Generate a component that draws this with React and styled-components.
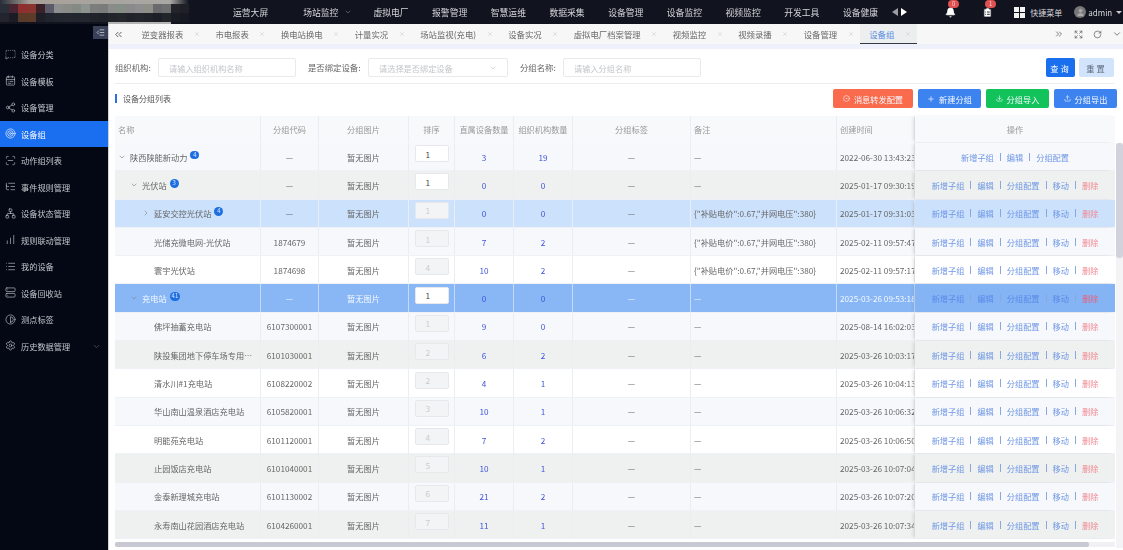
import styled, { createGlobalStyle } from 'styled-components'
import {
	Bell, CalendarRange, ChevronDown, ChevronRight, ChevronsLeft, ChevronsRight, CircleDot, ClipboardList,
	Contrast, Download, Expand, IndentDecrease, ListTree, List, MessageSquareDashed, Network, Plus, RotateCw,
	ScanLine, Server, Settings, Share2, Target, Upload, User, X, ChartNoAxesColumnIncreasing
} from 'lucide-react'

const NAV = ['运营大屏', '场站监控', '虚拟电厂', '报警管理', '智慧运维', '数据采集', '设备管理', '设备监控', '视频监控', '开发工具', '设备健康']
const TABS = ['逆变器报表', '市电报表', '换电站换电', '计量实况', '场站监视(充电)', '设备实况', '虚拟电厂档案管理', '视频监控', '视频录播', '设备管理', '设备组']
const MENU = [
	['设备分类', MessageSquareDashed], ['设备模板', CalendarRange], ['设备管理', Share2], ['设备组', Target],
	['动作组列表', ScanLine], ['事件规则管理', ListTree], ['设备状态管理', Network], ['规则联动管理', ChartNoAxesColumnIncreasing],
	['我的设备', List], ['设备回收站', Server], ['测点标签', Contrast], ['历史数据管理', Settings]
]
const REMARK = '{"补贴电价":0.67,"并网电压":380}'
const ROWS = [
	{ name: '陕西陕能新动力', level: 0, caret: 'down', badge: 4, sort: 1, on: true, direct: 3, org: 19, date: '2022-06-30 13:43:23', tone: 'light', short: true },
	{ name: '光伏站', level: 1, caret: 'down', badge: 3, sort: 1, on: true, direct: 0, org: 0, date: '2025-01-17 09:30:19', tone: 'grey' },
	{ name: '延安交控光伏站', level: 2, caret: 'right', badge: 4, sort: 1, direct: 0, org: 0, remark: REMARK, date: '2025-01-17 09:31:03', tone: 'picked' },
	{ name: '光储充微电网-光伏站', level: 2, code: '1874679', sort: 1, direct: 7, org: 2, remark: REMARK, date: '2025-02-11 09:57:47', tone: 'light' },
	{ name: '寰宇光伏站', level: 2, code: '1874698', sort: 4, direct: 10, org: 2, remark: REMARK, date: '2025-02-11 09:57:17', tone: 'white' },
	{ name: '充电站', level: 1, caret: 'down', badge: 41, sort: 1, on: true, direct: 0, org: 0, date: '2025-03-26 09:53:18', tone: 'strong' },
	{ name: '佛坪抽蓄充电站', level: 2, code: '6107300001', sort: 1, direct: 9, org: 0, date: '2025-08-14 16:02:03', tone: 'light' },
	{ name: '陕投集团地下停车场专用…', level: 2, code: '6101030001', sort: 2, direct: 6, org: 2, date: '2025-03-26 10:03:17', tone: 'grey' },
	{ name: '清水川#1充电站', level: 2, code: '6108220002', sort: 2, direct: 4, org: 1, date: '2025-03-26 10:04:13', tone: 'white' },
	{ name: '华山南山温泉酒店充电站', level: 2, code: '6105820001', sort: 3, direct: 10, org: 1, date: '2025-03-26 10:06:32', tone: 'light' },
	{ name: '明能苑充电站', level: 2, code: '6101120001', sort: 4, direct: 7, org: 2, date: '2025-03-26 10:06:50', tone: 'white' },
	{ name: '止园饭店充电站', level: 2, code: '6101040001', sort: 5, direct: 10, org: 1, date: '2025-03-26 10:07:04', tone: 'grey' },
	{ name: '金泰新理城充电站', level: 2, code: '6101130002', sort: 6, direct: 21, org: 2, date: '2025-03-26 10:07:20', tone: 'light' },
	{ name: '永寿南山花园酒店充电站', level: 2, code: '6104260001', sort: 7, direct: 11, org: 1, date: '2025-03-26 10:07:34', tone: 'grey' }
]
const TONES = { light: '#f6f8fb', white: '#ffffff', grey: '#eef1ef', picked: '#cce1fc', strong: '#89b7f5' }
const MOSAIC_TOP = ['#2a2e38', '#4a2430', '#8e3030', '#8a3430', '#3a2028', '#5a5a68', '#8e8e8e', '#8a8c88', '#868a84', '#8e9490', '#7c7e7e', '#7a7c7c', '#8a8c8a', '#868e88', '#8a8a8c', '#8e8e90', '#8e9088', '#6a6a6e', '#6e7070', '#22242a', '#1e2028']
const MOSAIC_BOTTOM = ['#22252e', '#1c1c28', '#5a3a28', '#5c3c28', '#1e1e28', '#20242c', '#22262e', '#24282e', '#22262e', '#24282e', '#20242a', '#1e2228', '#22262a', '#24282c', '#20242a', '#22262c', '#20242a', '#1c2026', '#22262a', '#1a1c24', '#161822']

const GlobalStyle = createGlobalStyle`
	html, body {
		margin: 0;
		height: 100%;
		overflow: hidden;
		background: #fff;
	}
	* {
		box-sizing: border-box;
	}
`

const Root = styled.div`
	width: 1123px;
	height: 550px;
	display: flex;
	flex-direction: column;
	overflow: hidden;
	font-family: "Noto Sans CJK SC", "Noto Sans", sans-serif;
	font-size: 8.2px;
	color: #666;
	filter: blur(0.45px);
`

const TopBar = styled.header`
	height: 24px;
	flex: none;
	display: flex;
	align-items: center;
	background: #11131e;
	color: #d4d6da;
	font-size: 8.8px;
`

const Logo = styled.div`
	width: 195px;
	height: 24px;
	flex: none;
	display: grid;
	grid-template-columns: repeat(21, 9px);
	grid-template-rows: 4px 9px 9px 2px;
	background: #11131e;
`

const LogoCell = styled.span`
	background: ${props => props.$color};
`

const LogoBand = styled.span`
	grid-column: 1 / -1;
	background: linear-gradient(90deg, #2a2e38 0, #a8a098 30px, #a8a8a4 170px, #a8a8a4 90%, #11131e 100%);
`

const LogoEdge = styled.span`
	grid-row: 4;
	grid-column: 13 / 20;
	background: #b4b4b4;
`

const NavList = styled.nav`
	display: flex;
	align-items: center;
	gap: 23.3px;
	margin-left: 38px;
`

const NavItem = styled.span`
	display: flex;
	align-items: center;
	width: ${props => props.$wide ? 46.9 : 35.4}px;
	white-space: nowrap;
	position: relative;
`

const NavCaret = styled(ChevronDown)`
	position: absolute;
	left: 41px;
	top: 2px;
	color: #777;
`

const NavArrows = styled.div`
	display: flex;
	gap: 3px;
	margin-left: 14px;
`

const Triangle = styled.span`
	width: 0;
	height: 0;
	border-top: 4.5px solid transparent;
	border-bottom: 4.5px solid transparent;
	${props => props.$left ? 'border-right: 6px solid #9b9da3;' : 'border-left: 6px solid #fff;'}
`

const TopTools = styled.div`
	display: flex;
	align-items: center;
	margin-left: 38px;
	font-size: 8px;
`

const AlertIcon = styled.span`
	position: relative;
	display: flex;
	width: 12px;
	margin-right: ${props => props.$gap}px;
	color: #fff;
`

const AlertCount = styled.b`
	position: absolute;
	left: 3px;
	top: -7px;
	width: 11px;
	height: 8px;
	border-radius: 4px;
	background: #e05050;
	color: #f7d0d0;
	font-size: 6px;
	font-weight: 400;
	line-height: 8px;
	text-align: center;
`

const QuickGrid = styled.span`
	width: 11px;
	height: 11px;
	display: grid;
	grid-template-columns: 1fr 1fr;
	gap: 1px;
	margin-right: 5px;
`

const QuickCell = styled.i`
	background: #f2f2f2;
`

const Avatar = styled.span`
	width: 12px;
	height: 12px;
	border-radius: 50%;
	background: #777;
	color: #aaa;
	display: flex;
	align-items: center;
	justify-content: center;
	margin: 0 2px 0 12px;
`

const UserCaret = styled.span`
	width: 0;
	height: 0;
	margin-left: 4px;
	border-left: 3px solid transparent;
	border-right: 3px solid transparent;
	border-top: 3px solid #ccc;
`

const Body = styled.div`
	flex: 1;
	min-height: 0;
	display: flex;
`

const Sidebar = styled.aside`
	width: 109px;
	flex: none;
	background: #030814;
	border-right: 1px solid #d0d2d6;
	color: #c2c6cc;
`

const ToggleRow = styled.div`
	height: 17px;
	display: flex;
	justify-content: flex-end;
	padding-top: 2px;
`

const Toggle = styled.button`
	width: 15px;
	height: 13px;
	padding: 0;
	border: 0;
	background: #3a4058;
	color: #d6d8e0;
	display: flex;
	align-items: center;
	justify-content: center;
`

const MenuItem = styled.div`
	height: 26.5px;
	display: flex;
	align-items: center;
	gap: 5px;
	padding-left: 5px;
	position: relative;
	${props => props.$active && 'background: #1a6ff0; color: #fff;'}
`

const MenuCaret = styled(ChevronDown)`
	position: absolute;
	left: 92px;
	top: 9px;
	color: #555a66;
`

const Main = styled.main`
	flex: 1;
	min-width: 0;
	display: flex;
	flex-direction: column;
	background: #fff;
`

const TabBar = styled.div`
	height: 20px;
	flex: none;
	display: flex;
	align-items: center;
	background: #f7f7f7;
	color: #6a6a6a;
	font-size: 8.4px;
`

const TabBack = styled.span`
	width: 23px;
	flex: none;
	display: flex;
	padding-left: 4px;
	color: #555;
`

const Tab = styled.div`
	height: 20px;
	display: flex;
	align-items: center;
	gap: 10.5px;
	padding: 0 6px 0 9.5px;
	white-space: nowrap;
	${props => props.$active && `
		background: #eceef0;
		color: #5b8fe0;
		border-bottom: 1.5px solid #333a44;
	`}
`

const TabClose = styled(X)`
	color: #c8c8c8;
	flex: none;
`

const TabTools = styled.div`
	margin-left: auto;
	display: flex;
	align-items: center;
	gap: 10px;
	padding-right: 1px;
	color: #666;
`

const Strip = styled.div`
	height: 5px;
	flex: none;
	background: #eef0fb;
`

const Content = styled.div`
	flex: 1;
	min-height: 0;
	padding: 9px 0 0 6px;
	position: relative;
	overflow: hidden;
`

const FilterBar = styled.form`
	width: 999px;
	height: 26px;
	display: flex;
	align-items: flex-start;
	border-bottom: 1px solid #eceef2;
	margin: 0;
`

const FilterLabel = styled.label`
	width: ${props => props.$width}px;
	flex: none;
	height: 19px;
	line-height: 19px;
	margin-left: ${props => props.$left || 0}px;
	margin-right: 7px;
	color: #666;
	font-size: 8.4px;
	white-space: nowrap;
`

const FilterInput = styled.div`
	width: ${props => props.$width}px;
	flex: none;
	height: 19px;
	padding: 0 10px;
	border: 1px solid #e8eaee;
	border-radius: 2px;
	color: #c4c6ca;
	display: flex;
	align-items: center;
	justify-content: space-between;
`

const FilterActions = styled.div`
	margin-left: auto;
	display: flex;
	gap: 4px;
`

const QueryButton = styled.button`
	width: ${props => props.$primary ? 29 : 35}px;
	height: 19px;
	padding: 0;
	border: 0;
	border-radius: 2px;
	font: inherit;
	letter-spacing: 2px;
	background: ${props => props.$primary ? '#1a6fee' : '#d2e4fb'};
	color: ${props => props.$primary ? '#fff' : '#5a6a80'};
`

const TitleRow = styled.div`
	height: 19px;
	width: 1002px;
	margin: 5px 0 8px;
	display: flex;
	align-items: center;
	justify-content: space-between;
`

const Title = styled.h2`
	margin: 0;
	padding-left: 6px;
	border-left: 2px solid #2a6fe8;
	font-size: 8px;
	font-weight: 400;
	line-height: 9px;
	color: #555;
`

const ActionGroup = styled.div`
	display: flex;
	gap: 5px;
`

const ActionButton = styled.button`
	width: ${props => props.$width}px;
	height: 19px;
	padding: 0;
	border: 0;
	border-radius: 2px;
	display: flex;
	align-items: center;
	justify-content: center;
	gap: 4px;
	font: inherit;
	color: #f4f8ff;
	background: ${props => props.$color};
`

const Table = styled.div`
	width: 1000px;
	position: relative;
`

const Row = styled.div`
	display: grid;
	grid-template-columns: 146px 58px 90px 46px 59px 59px 118px 146px 78px 200px;
	height: ${props => props.$head ? 27 : 28.3}px;
	background: ${props => props.$bg};
	color: ${props => props.$strong ? '#f4f8ff' : props.$head ? '#999' : '#666'};
	border-bottom: 1px solid ${props => props.$head ? 'transparent' : '#eef1f6'};
`

const Cell = styled.div`
	min-width: 0;
	display: flex;
	align-items: center;
	justify-content: ${props => props.$left ? 'flex-start' : 'center'};
	padding-left: ${props => props.$left ? 3 : 0}px;
	border-right: 1px solid ${props => props.$strong ? '#c4dafa' : '#e9eef5'};
	white-space: nowrap;
	overflow: hidden;
`

const NameCell = styled(Cell)`
	justify-content: flex-start;
	padding-left: ${props => 3 + props.$level * 12}px;
`

const Caret = styled.span`
	width: 12px;
	flex: none;
	display: flex;
	color: #888;
`

const Leaf = styled.span`
	width: 12px;
	flex: none;
`

const Badge = styled.b`
	min-width: 9px;
	height: 8.5px;
	margin: -3px 0 0 3px;
	padding: 0 2px;
	border-radius: 4.5px;
	background: #1d6fe0;
	color: #dce9fc;
	font-size: 6px;
	font-weight: 400;
	line-height: 8.5px;
	text-align: center;
`

const SortInput = styled.div`
	width: 34px;
	height: 17px;
	margin-bottom: 6px;
	padding-left: 10px;
	border: 1px solid #e6e8ec;
	border-radius: 2px;
	background: ${props => props.$on ? '#fff' : '#f3f4f6'};
	color: ${props => props.$on ? '#444' : '#ccc'};
	display: flex;
	align-items: center;
`

const Count = styled.span`
	color: #3f52dc;
`

const OpCell = styled.div`
	display: flex;
	align-items: center;
	justify-content: center;
	gap: 6px;
	position: relative;
	background: ${props => props.$strong ? '#85b4f5' : 'inherit'};
	box-shadow: -3px 0 3px -1px rgba(80, 80, 80, 0.14);
	white-space: nowrap;
`

const OpLink = styled.span`
	color: ${props => props.$danger ? (props.$strong ? '#e8607a' : '#f08a94') : (props.$strong ? '#5a8ae8' : '#6f97e6')};
`

const OpBar = styled.i`
	width: 1px;
	height: 8px;
	background: #8aa8e0;
`

const HScroll = styled.div`
	position: absolute;
	left: 6px;
	top: 493px;
	width: 1000px;
	height: 5px;
	background: #f1f1f4;
`

const HThumb = styled.div`
	width: 974px;
	height: 5px;
	border-radius: 2px;
	background: #c9c9d4;
`

const VScroll = styled.div`
	position: absolute;
	right: 0;
	top: 94px;
	width: 7px;
	height: 405px;
	background: #f4f4f6;
`

const VThumb = styled.div`
	width: 7px;
	height: 115px;
	border-radius: 3px;
	background: #d2d2dc;
`

const OpLinks = ({ short, strong }) => {
	const items = short ? ['新增子组', '编辑', '分组配置'] : ['新增子组', '编辑', '分组配置', '移动', '删除']
	return items.map((item, index) => (
		<OpPart key={item} first={index === 0} danger={item === '删除'} strong={strong}>{item}</OpPart>
	))
}

const OpPart = ({ first, danger, strong, children }) => (
	<>
		{!first && <OpBar />}
		<OpLink $danger={danger} $strong={strong}>{children}</OpLink>
	</>
)

const TableRow = ({ row }) => {
	const strong = row.tone === 'strong'
	return (
		<Row $bg={TONES[row.tone]} $strong={strong}>
			<NameCell $level={row.level} $strong={strong}>
				{row.caret ? (
					<Caret>
						{row.caret === 'down' ? <ChevronDown size={8} /> : <ChevronRight size={8} />}
					</Caret>
				) : <Leaf />}
				<span>{row.name}</span>
				{row.badge && <Badge>{row.badge}</Badge>}
			</NameCell>
			<Cell $strong={strong}>{row.code || '—'}</Cell>
			<Cell $strong={strong}>暂无图片</Cell>
			<Cell $strong={strong}><SortInput $on={row.on}>{row.sort}</SortInput></Cell>
			<Cell $strong={strong}><Count>{row.direct}</Count></Cell>
			<Cell $strong={strong}><Count>{row.org}</Count></Cell>
			<Cell $strong={strong}>—</Cell>
			<Cell $left $strong={strong}>{row.remark || '—'}</Cell>
			<Cell $left $strong={strong}>{row.date}</Cell>
			<OpCell $strong={strong}><OpLinks short={row.short} strong={strong} /></OpCell>
		</Row>
	)
}

const App = () => (
	<Root>
		<GlobalStyle />
		<TopBar>
			<Logo>
				<LogoBand />
				{MOSAIC_TOP.map((color, index) => <LogoCell key={index} $color={color} />)}
				{MOSAIC_BOTTOM.map((color, index) => <LogoCell key={index} $color={color} />)}
				<LogoEdge />
			</Logo>
			<NavList>
				{NAV.map((item, index) => (
					<NavItem key={index} $wide={index < 2}>
						{item}
						{index === 1 && <NavCaret size={8} />}
					</NavItem>
				))}
			</NavList>
			<NavArrows>
				<Triangle $left />
				<Triangle />
			</NavArrows>
			<TopTools>
				<AlertIcon $gap={25}>
					<Bell size={11} fill="#fff" />
					<AlertCount>0</AlertCount>
				</AlertIcon>
				<AlertIcon $gap={20}>
					<ClipboardList size={11} fill="#fff" color="#11131e" />
					<AlertCount>1</AlertCount>
				</AlertIcon>
				<QuickGrid>
					<QuickCell /><QuickCell /><QuickCell /><QuickCell />
				</QuickGrid>
				快捷菜单
				<Avatar><User size={9} fill="#aaa" /></Avatar>
				<span>admin</span>
				<UserCaret />
			</TopTools>
		</TopBar>
		<Body>
			<Sidebar>
				<ToggleRow>
					<Toggle><IndentDecrease size={9} /></Toggle>
				</ToggleRow>
				{MENU.map(([label, Icon], index) => (
					<MenuItem key={label} $active={label === '设备组'}>
						<Icon size={11} strokeWidth={1.4} />
						{label}
						{index === MENU.length - 1 && <MenuCaret size={9} />}
					</MenuItem>
				))}
			</Sidebar>
			<Main>
				<TabBar>
					<TabBack><ChevronsLeft size={11} /></TabBack>
					{TABS.map((tab, index) => (
						<Tab key={index} $active={tab === '设备组'}>
							{tab}
							<TabClose size={6} />
						</Tab>
					))}
					<TabTools>
						<ChevronsRight size={10} />
						<Expand size={9} />
						<RotateCw size={9} />
						<ChevronDown size={10} />
					</TabTools>
				</TabBar>
				<Strip />
				<Content>
					<FilterBar>
						<FilterLabel $width={36}>组织机构:</FilterLabel>
						<FilterInput $width={138}>请输入组织机构名称</FilterInput>
						<FilterLabel $left={12} $width={53}>是否绑定设备:</FilterLabel>
						<FilterInput $width={140}>
							请选择是否绑定设备
							<ChevronDown size={8} />
						</FilterInput>
						<FilterLabel $left={12} $width={36}>分组名称:</FilterLabel>
						<FilterInput $width={138}>请输入分组名称</FilterInput>
						<FilterActions>
							<QueryButton $primary>查询</QueryButton>
							<QueryButton>重置</QueryButton>
						</FilterActions>
					</FilterBar>
					<TitleRow>
						<Title>设备分组列表</Title>
						<ActionGroup>
							<ActionButton $width={80} $color="#fa6a4c"><CircleDot size={7} />消息转发配置</ActionButton>
							<ActionButton $width={63} $color="#3d83f0"><Plus size={8} />新建分组</ActionButton>
							<ActionButton $width={63} $color="#12c35c"><Download size={7} />分组导入</ActionButton>
							<ActionButton $width={63} $color="#3d83f0"><Upload size={7} />分组导出</ActionButton>
						</ActionGroup>
					</TitleRow>
					<Table>
						<Row $head $bg="#f7f9fb">
							<Cell $left>名称</Cell>
							<Cell>分组代码</Cell>
							<Cell>分组图片</Cell>
							<Cell>排序</Cell>
							<Cell>直属设备数量</Cell>
							<Cell>组织机构数量</Cell>
							<Cell>分组标签</Cell>
							<Cell $left>备注</Cell>
							<Cell $left>创建时间</Cell>
							<OpCell>操作</OpCell>
						</Row>
						{ROWS.map((row) => <TableRow key={row.name} row={row} />)}
					</Table>
					<HScroll><HThumb /></HScroll>
					<VScroll><VThumb /></VScroll>
				</Content>
			</Main>
		</Body>
	</Root>
)

export default App
